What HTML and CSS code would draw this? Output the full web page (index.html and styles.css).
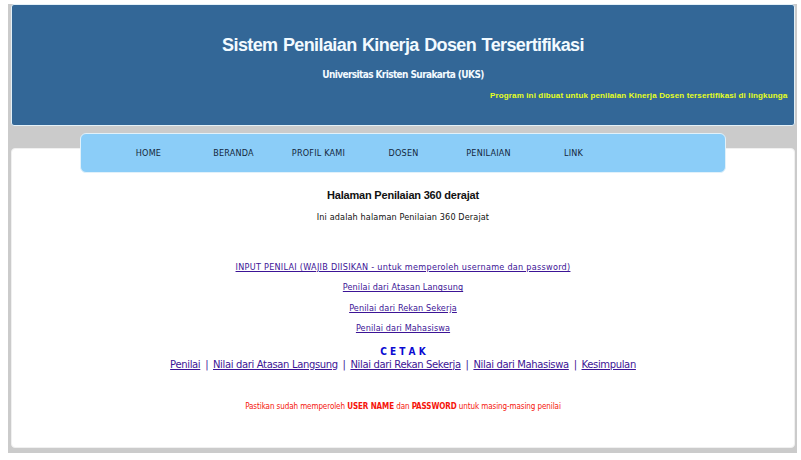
FILE: index.html
```html
<!DOCTYPE html>
<html lang="id">
<head>
  <meta charset="UTF-8" />
  <title>Sistem Penilaian Kinerja Dosen Tersertifikasi</title>
  <link rel="stylesheet" href="styles.css">
</head>
<body>
  <div class="wrapper">
    <header>
      <h1>Sistem Penilaian Kinerja Dosen Tersertifikasi</h1>
      <p class="kampus">Universitas Kristen Surakarta (UKS)</p>
      <div class="berjalan"><span>Program ini dibuat untuk penilaian Kinerja Dosen tersertifikasi di lingkungan</span></div>
    </header>

    <nav>
      <a href="#">HOME</a>
      <a href="#">BERANDA</a>
      <a href="#">PROFIL KAMI</a>
      <a href="#">DOSEN</a>
      <a href="#">PENILAIAN</a>
      <a href="#">LINK</a>
    </nav>

    <main>
      <h2>Halaman Penilaian 360 derajat</h2>
      <p class="intro">Ini adalah halaman Penilaian 360 Derajat</p>

      <ul class="menu-penilai">
        <li><a class="wajib" href="#">INPUT PENILAI (WAJIB DIISIKAN - untuk memperoleh username dan password)</a></li>
        <li><a href="#">Penilai dari Atasan Langsung</a></li>
        <li><a href="#">Penilai dari Rekan Sekerja</a></li>
        <li><a href="#">Penilai dari Mahasiswa</a></li>
      </ul>

      <h3>C E T A K</h3>
      <p class="cetak">
        <a href="#">Penilai</a> |
        <a href="#">Nilai dari Atasan Langsung</a> |
        <a href="#">Nilai dari Rekan Sekerja</a> |
        <a href="#">Nilai dari Mahasiswa</a> |
        <a href="#">Kesimpulan</a>
      </p>

      <p class="catatan">Pastikan sudah memperoleh <b>USER NAME</b> dan <b>PASSWORD</b> untuk masing-masing penilai</p>
    </main>
  </div>
</body>
</html>
```
FILE: styles.css
```css
* { box-sizing: border-box; margin: 0; padding: 0; }
body {
  background: #fff;
  font-family: "DejaVu Sans Condensed", Tahoma, sans-serif;
  font-size: 9px;
  color: #111;
}
.wrapper {
  width: 789px;
  height: 449px;
  margin: 4px 0 0 8px;
  padding: 0 2px 0 3px;
  background: #cbcbcb;
}
header {
  height: 122px;
  border: 1px solid #e4f1f8;
  border-radius: 3px;
  background: #336797;
  color: #f2faff;
  text-align: center;
  white-space: nowrap;
}
h1 {
  padding-top: 28px;
  font: bold 18px/24px "Liberation Sans", Arial, sans-serif;
  letter-spacing: -0.6px;
  word-spacing: 1px;
}
.kampus {
  margin-top: 11px;
  font-size: 10px;
  font-weight: bold;
  line-height: 14px;
  letter-spacing: -0.6px;
}
.berjalan {
  width: 299px;
  margin: 8px 6px 0 auto;
  padding-left: 1px;
  overflow: hidden;
  text-align: left;
  color: #e6ff1e;
  font: bold 8px/12px "Liberation Sans", Arial, sans-serif;
  letter-spacing: 0.14px;
}
nav {
  position: relative;
  display: grid;
  grid-template-columns: repeat(6, 85px);
  width: 646px;
  height: 40px;
  margin: 7px 0 0 69px;
  padding-left: 25px;
  border: 1px solid #e1f1fa;
  border-radius: 6px;
  background: #8bcdf8;
  line-height: 38px;
  text-align: center;
}
nav a {
  color: #14283c;
  text-decoration: none;
  letter-spacing: 0.2px;
}
main {
  height: 300px;
  margin-top: -25px;
  padding-top: 38px;
  border: 1px solid #f0f0f0;
  border-radius: 4px;
  background: #fff;
  text-align: center;
  white-space: nowrap;
}
main a { color: #3c1496; }
h2 {
  font: bold 11px/16px "Liberation Sans", Arial, sans-serif;
  letter-spacing: -0.2px;
}
.intro {
  margin-top: 6px;
  line-height: 16px;
  letter-spacing: 0.13px;
}
.menu-penilai {
  margin-top: 32px;
  list-style: none;
  line-height: 20.4px;
  letter-spacing: 0.12px;
}
.wajib { letter-spacing: 0.28px; }
h3 {
  margin-top: 6px;
  color: #0a0ad2;
  font-size: 10px;
  line-height: 13px;
}
.cetak {
  color: #3c1496;
  font: 10px/14px "DejaVu Sans", Verdana, sans-serif;
  letter-spacing: -0.35px;
  word-spacing: 2px;
}
.cetak a { word-spacing: 0; }
.catatan {
  margin-top: 29px;
  color: #f5140a;
  font-size: 8px;
  line-height: 12px;
  letter-spacing: -0.09px;
}
```
